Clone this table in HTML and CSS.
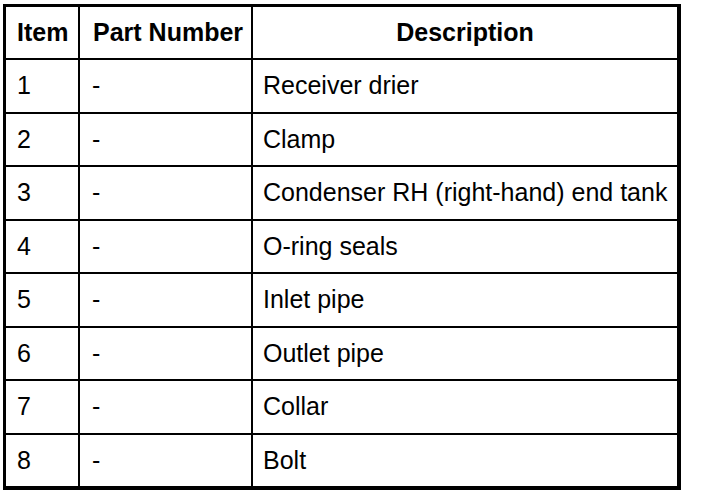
FILE: index.html
```html
<!DOCTYPE html>
<html>
<head>
<meta charset="utf-8">
<link rel="stylesheet" href="styles.css">
</head>
<body>
<div class="sheet">
<table class="parts">
<thead>
<tr><th class="c-item">Item</th><th class="c-part">Part Number</th><th class="c-desc">Description</th></tr>
</thead>
<tbody>
<tr><td>1</td><td>-</td><td>Receiver drier</td></tr>
<tr><td>2</td><td>-</td><td>Clamp</td></tr>
<tr><td>3</td><td>-</td><td>Condenser RH (right-hand) end tank</td></tr>
<tr><td>4</td><td>-</td><td>O-ring seals</td></tr>
<tr><td>5</td><td>-</td><td>Inlet pipe</td></tr>
<tr><td>6</td><td>-</td><td>Outlet pipe</td></tr>
<tr><td>7</td><td>-</td><td>Collar</td></tr>
<tr><td>8</td><td>-</td><td>Bolt</td></tr>
</tbody>
</table>
</div>
</body>
</html>
```
FILE: styles.css
```css
html, body {
  margin: 0;
  padding: 0;
  background: #fff;
}
.sheet {
  padding: 4px 0 0 3px;
}
.parts {
  border-collapse: separate;
  border-spacing: 0;
  border-top: 3px solid #000;
  border-left: 3px solid #000;
  border-right: 4px solid #000;
  border-bottom: 4px solid #000;
  font-family: "Liberation Sans", Arial, sans-serif;
  font-size: 25px;
  color: #000;
  table-layout: fixed;
}
.parts th, .parts td {
  padding: 0 0 0 11px;
  text-align: left;
  vertical-align: middle;
  border-right: 2px solid #000;
  border-bottom: 2px solid #000;
  box-sizing: content-box;
  white-space: nowrap;
}
.parts th:last-child, .parts td:last-child {
  border-right: 0;
  padding-left: 10px;
}
.parts tbody tr:last-child td {
  border-bottom: 0;
}
.parts th {
  font-weight: bold;
  height: 51px;
}
.parts td {
  height: 51.5px;
}
.parts th.c-item { width: 61px; }
.parts th.c-part { width: 158px; padding-left: 13px; }
.parts th.c-desc { width: 424px; text-align: center; padding-left: 0; }
.parts td:nth-child(2) { padding-left: 12px; }
```
